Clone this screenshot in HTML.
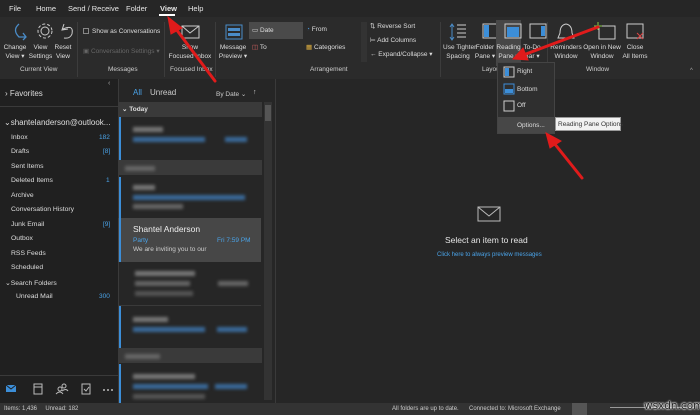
<!DOCTYPE html>
<html><head><meta charset="utf-8"><style>
*{margin:0;padding:0;box-sizing:border-box}
body{width:700px;height:415px;overflow:hidden;background:#262626;font-family:"Liberation Sans",sans-serif;color:#ddd;position:relative;font-size:7px}
.a{position:absolute;white-space:nowrap}
.tab{top:4px;font-size:7.5px;color:#e6e6e6}
.lbl{font-size:6.5px;color:#ddd;text-align:center;line-height:9px}
.glbl{top:66px;font-size:6.5px;color:#ccc}
.sep{position:absolute;top:22px;width:1px;height:55px;background:#3c3c3c}
.fold{left:11px;font-size:6.8px;color:#ddd}
.cnt{font-size:6.5px;color:#4aa3e8}
.blur{position:absolute;background:#5a6a7a;filter:blur(1.5px);height:5px}
.bar{position:absolute;left:119px;width:2px;background:#3c8ed8}
.hdr{position:absolute;left:118px;width:144px;height:15px;background:#3a3a3a}
</style></head><body>
<div class="a" style="left:0;top:0;width:700px;height:17px;background:#262626"></div>
<div class="a tab" style="left:9px">File</div>
<div class="a tab" style="left:36px">Home</div>
<div class="a tab" style="left:68px">Send / Receive</div>
<div class="a tab" style="left:126px">Folder</div>
<div class="a tab" style="left:160px;font-weight:bold">View</div>
<div class="a" style="left:159px;top:14px;width:16px;height:2px;background:#fff"></div>
<div class="a tab" style="left:188px">Help</div>
<div class="a" style="left:0;top:17px;width:700px;height:62px;background:#2b2b2b"></div>
<svg class="a" style="left:6px;top:20px" width="100" height="22"><path d="M13 4 Q6 10 13 17 L20 17 M17 13 L20 17 L17 20" stroke="#4a8cc8" fill="none" stroke-width="1.3"/><circle cx="39" cy="11" r="4" stroke="#ccc" fill="none"/><circle cx="39" cy="11" r="7" stroke="#ccc" fill="none" stroke-dasharray="3 2"/><path d="M58 4 L56 10 L62 9 M57 9 Q68 4 66 14 Q64 19 58 18" stroke="#ccc" fill="none"/></svg>
<div class="a lbl" style="left:3px;top:43px;width:24px">Change<br>View ▾</div>
<div class="a lbl" style="left:28px;top:43px;width:25px">View<br>Settings</div>
<div class="a lbl" style="left:53px;top:43px;width:20px">Reset<br>View</div>
<div class="a glbl" style="left:20px">Current View</div>
<div class="sep" style="left:77px"></div>
<div class="a" style="left:83px;top:28px;width:6px;height:6px;border:1px solid #888"></div>
<div class="a" style="left:92px;top:28px;font-size:6.5px;color:#ddd">Show as Conversations</div>
<div class="a" style="left:83px;top:47px;font-size:6.5px;color:#666">▣ Conversation Settings ▾</div>
<div class="a glbl" style="left:108px">Messages</div>
<div class="sep" style="left:164px"></div>
<svg class="a" style="left:180px;top:22px" width="22" height="18"><rect x="2" y="4" width="17" height="12" stroke="#ccc" fill="none"/><path d="M2 4 L10 11 L19 4" stroke="#ccc" fill="none"/></svg>
<div class="a lbl" style="left:168px;top:43px;width:44px">Show<br>Focused Inbox</div>
<div class="a glbl" style="left:170px">Focused Inbox</div>
<div class="sep" style="left:215px"></div>
<svg class="a" style="left:224px;top:22px" width="20" height="20"><rect x="2" y="3" width="16" height="14" stroke="#4a8cc8" fill="none"/><rect x="4" y="6" width="12" height="3" fill="#4a8cc8"/><rect x="4" y="11" width="12" height="3" fill="#4a8cc8"/></svg>
<div class="a lbl" style="left:218px;top:43px;width:30px">Message<br>Preview ▾</div>
<div class="a" style="left:249px;top:22px;width:54px;height:17px;background:#4a4a4a"></div>
<div class="a" style="left:252px;top:26px;font-size:6.5px">▭ Date</div>
<div class="a" style="left:252px;top:43px;font-size:6.5px;color:#ddd"><span style="color:#d66">◫</span> To</div>
<div class="a" style="left:306px;top:26px;font-size:6.5px"><span style="color:#4a8cc8">◔</span> From</div>
<div class="a" style="left:306px;top:43px;font-size:6.5px"><span style="color:#e0b040">▦</span> Categories</div>
<div class="a" style="left:361px;top:22px;width:6px;height:40px;background:#333"></div>
<div class="a" style="left:370px;top:22px;font-size:6.5px">⇅ Reverse Sort</div>
<div class="a" style="left:370px;top:36px;font-size:6.5px">⊨ Add Columns</div>
<div class="a" style="left:370px;top:50px;font-size:6.5px">← Expand/Collapse ▾</div>
<div class="a glbl" style="left:310px">Arrangement</div>
<div class="sep" style="left:440px"></div>
<svg class="a" style="left:448px;top:21px" width="125" height="22"><path d="M4 3 V19 M2 6 L4 3 L6 6 M2 16 L4 19 L6 16" stroke="#4a8cc8" fill="none"/><path d="M9 4 H18 M9 8 H18 M9 12 H18 M9 16 H18" stroke="#ccc"/><rect x="35" y="3" width="16" height="14" stroke="#ccc" fill="none"/><rect x="36" y="4" width="5" height="12" fill="#3c8ed8"/><rect x="82" y="3" width="16" height="14" stroke="#ccc" fill="none"/><rect x="93" y="5" width="4" height="10" fill="#3c8ed8"/></svg>
<div class="a" style="left:496px;top:20px;width:25px;height:46px;background:#474747"></div>
<svg class="a" style="left:503px;top:21px" width="20" height="20"><rect x="2" y="3" width="16" height="14" stroke="#ccc" fill="none"/><rect x="4" y="6" width="12" height="10" fill="#3c8ed8"/></svg>
<div class="a lbl" style="left:443px;top:43px;width:30px">Use Tighter<br>Spacing</div>
<div class="a lbl" style="left:474px;top:43px;width:22px">Folder<br>Pane ▾</div>
<div class="a lbl" style="left:496px;top:43px;width:25px">Reading<br>Pane ▾</div>
<div class="a lbl" style="left:521px;top:43px;width:22px">To-Do<br>Bar ▾</div>
<div class="a glbl" style="left:482px">Layout</div>
<div class="sep" style="left:547px"></div>
<svg class="a" style="left:555px;top:21px" width="120" height="22"><path d="M11 3 Q5 4 5 12 L3 17 H19 L17 12 Q17 4 11 3" stroke="#ccc" fill="none"/><rect x="44" y="5" width="16" height="13" stroke="#ccc" fill="none"/><path d="M43 1 V9 M39 5 H47" stroke="#8c4"/><rect x="72" y="3" width="16" height="14" stroke="#ccc" fill="none"/><path d="M82 12 L88 18 M88 12 L82 18" stroke="#d44"/></svg>
<div class="a lbl" style="left:550px;top:43px;width:32px">Reminders<br>Window</div>
<div class="a lbl" style="left:583px;top:43px;width:38px">Open in New<br>Window</div>
<div class="a lbl" style="left:620px;top:43px;width:30px">Close<br>All Items</div>
<div class="a glbl" style="left:586px">Window</div>
<div class="a" style="left:690px;top:68px;font-size:6px;color:#aaa">^</div>
<div class="a" style="left:0;top:79px;width:118px;height:324px;background:#202020"></div>
<div class="a" style="left:108px;top:80px;font-size:7px;color:#aaa">‹</div>
<div class="a" style="left:5px;top:89px;font-size:8px">› Favorites</div>
<div class="a" style="left:0;top:106px;width:118px;height:1px;background:#3a3a3a"></div>
<div class="a" style="left:4px;top:118px;font-size:8px">⌄shantelanderson@outlook...</div>
<div class="a fold" style="top:134px">Inbox</div><div class="a cnt" style="left:99px;top:134px">182</div>
<div class="a fold" style="top:148px">Drafts</div><div class="a cnt" style="left:103px;top:148px">[8]</div>
<div class="a fold" style="top:163px">Sent Items</div>
<div class="a fold" style="top:177px">Deleted Items</div><div class="a cnt" style="left:106px;top:177px">1</div>
<div class="a fold" style="top:192px">Archive</div>
<div class="a fold" style="top:206px">Conversation History</div>
<div class="a fold" style="top:221px">Junk Email</div><div class="a cnt" style="left:103px;top:221px">[9]</div>
<div class="a fold" style="top:235px">Outbox</div>
<div class="a fold" style="top:250px">RSS Feeds</div>
<div class="a fold" style="top:264px">Scheduled</div>
<div class="a fold" style="top:279px;left:5px">⌄Search Folders</div>
<div class="a fold" style="top:293px;left:16px">Unread Mail</div><div class="a cnt" style="left:99px;top:293px">300</div>
<div class="a" style="left:0;top:375px;width:118px;height:1px;background:#3a3a3a"></div>
<svg class="a" style="left:4px;top:382px" width="112" height="14"><rect x="2" y="3" width="10" height="7" fill="#3c8ed8"/><path d="M2 3 L7 7 L12 3" stroke="#202020" fill="none"/><rect x="30" y="2" width="8" height="10" stroke="#bbb" fill="none"/><path d="M30 5 H38" stroke="#bbb"/><circle cx="56" cy="7" r="2" stroke="#bbb" fill="none"/><circle cx="60" cy="4" r="2" stroke="#bbb" fill="none"/><path d="M52 12 Q56 8 59 12 M58 9 Q62 6 64 9" stroke="#bbb" fill="none"/><rect x="78" y="2" width="8" height="10" stroke="#bbb" fill="none"/><path d="M80 7 L82 9 L85 5" stroke="#bbb" fill="none"/><circle cx="100" cy="8" r="1" fill="#bbb"/><circle cx="104" cy="8" r="1" fill="#bbb"/><circle cx="108" cy="8" r="1" fill="#bbb"/></svg>
<div class="a" style="left:118px;top:79px;width:157px;height:324px;background:#262626"></div>
<div class="a" style="left:118px;top:79px;width:1px;height:324px;background:#3a3a3a"></div>
<div class="a" style="left:133px;top:88px;font-size:8px;color:#4aa3e8">All</div>
<div class="a" style="left:150px;top:88px;font-size:8px;color:#ccc">Unread</div>
<div class="a" style="left:216px;top:90px;font-size:6.5px;color:#ccc">By Date ⌄</div>
<div class="a" style="left:253px;top:89px;font-size:7px;color:#ccc">↑</div>
<div class="a" style="left:264px;top:102px;width:8px;height:298px;background:#333"></div>
<div class="a" style="left:265px;top:105px;width:6px;height:16px;background:#555"></div>
<div class="hdr" style="top:102px"></div><div class="a" style="left:122px;top:105px;font-size:6.5px;color:#ddd;font-weight:bold">⌄ Today</div>
<div class="bar" style="top:117px;height:43px"></div>
<div class="blur" style="left:133px;top:127px;width:30px;background:#777"></div>
<div class="blur" style="left:133px;top:137px;width:72px;background:#3a6a9a"></div><div class="blur" style="left:225px;top:137px;width:22px;background:#3a6a9a"></div>
<div class="hdr" style="top:160px"></div><div class="blur" style="left:125px;top:166px;width:30px;background:#666"></div>
<div class="bar" style="top:177px;height:41px"></div>
<div class="blur" style="left:133px;top:185px;width:22px;background:#777"></div>
<div class="blur" style="left:133px;top:195px;width:112px;background:#3a6a9a"></div>
<div class="blur" style="left:133px;top:204px;width:50px;background:#666"></div>
<div class="a" style="left:118px;top:218px;width:143px;height:44px;background:#474747"></div>
<div class="bar" style="top:218px;height:44px"></div>
<div class="a" style="left:133px;top:224px;font-size:8.5px;color:#eee">Shantel Anderson</div>
<div class="a" style="left:133px;top:237px;font-size:6.5px;color:#4aa3e8">Party</div>
<div class="a" style="left:217px;top:237px;font-size:6.5px;color:#4aa3e8">Fri 7:59 PM</div>
<div class="a" style="left:133px;top:246px;font-size:6.5px;color:#ccc">We are inviting you to our</div>
<div class="blur" style="left:135px;top:271px;width:60px;background:#777"></div>
<div class="blur" style="left:135px;top:281px;width:55px;background:#666"></div><div class="blur" style="left:218px;top:281px;width:30px;background:#666"></div>
<div class="blur" style="left:135px;top:291px;width:58px;background:#555"></div>
<div class="a" style="left:118px;top:305px;width:143px;height:1px;background:#3a3a3a"></div>
<div class="bar" style="top:306px;height:43px"></div>
<div class="blur" style="left:133px;top:317px;width:35px;background:#777"></div>
<div class="blur" style="left:133px;top:327px;width:72px;background:#3a6a9a"></div><div class="blur" style="left:217px;top:327px;width:30px;background:#3a6a9a"></div>
<div class="hdr" style="top:348px"></div><div class="blur" style="left:125px;top:354px;width:35px;background:#666"></div>
<div class="bar" style="top:364px;height:39px"></div>
<div class="blur" style="left:133px;top:374px;width:62px;background:#777"></div>
<div class="blur" style="left:133px;top:384px;width:75px;background:#3a6a9a"></div><div class="blur" style="left:215px;top:384px;width:32px;background:#3a6a9a"></div>
<div class="blur" style="left:133px;top:394px;width:72px;background:#555"></div>
<div class="a" style="left:275px;top:79px;width:1px;height:324px;background:#3a3a3a"></div>
<svg class="a" style="left:477px;top:206px" width="24" height="16"><rect x="1" y="1" width="22" height="14" stroke="#bbb" fill="none"/><path d="M1 1 L12 10 L23 1" stroke="#bbb" fill="none"/></svg>
<div class="a" style="left:445px;top:235px;font-size:8.5px;color:#e6e6e6">Select an item to read</div>
<div class="a" style="left:437px;top:252px;font-size:6px;color:#4aa3e8">Click here to always preview messages</div>
<div class="a" style="left:497px;top:62px;width:58px;height:72px;background:#2f2f2f;border:1px solid #444"></div>
<svg class="a" style="left:503px;top:66px" width="12" height="48"><rect x="1" y="1" width="10" height="10" stroke="#ccc" fill="none"/><rect x="2" y="2" width="4" height="8" fill="#3c8ed8"/><rect x="1" y="18" width="10" height="10" stroke="#3c8ed8" fill="none"/><rect x="2" y="23" width="8" height="4" fill="#3c8ed8"/><rect x="1" y="35" width="10" height="10" stroke="#ccc" fill="none"/></svg>
<div class="a" style="left:517px;top:68px;font-size:6.5px">Right</div>
<div class="a" style="left:517px;top:86px;font-size:6.5px">Bottom</div>
<div class="a" style="left:517px;top:102px;font-size:6.5px">Off</div>
<div class="a" style="left:498px;top:117px;width:56px;height:16px;background:#474747"></div>
<div class="a" style="left:517px;top:122px;font-size:6.5px">Options...</div>
<div class="a" style="left:555px;top:117px;width:66px;height:14px;background:#f2f2f2;border:1px solid #999;color:#333;font-size:6.5px;padding:3px 2px">Reading Pane Options</div>
<div class="a" style="left:0;top:403px;width:700px;height:12px;background:#333"></div>
<div class="a" style="left:4px;top:406px;font-size:6px;color:#ccc">Items: 1,436 &nbsp;&nbsp;&nbsp; Unread: 182</div>
<div class="a" style="left:392px;top:406px;font-size:6px;color:#ccc">All folders are up to date.</div>
<div class="a" style="left:469px;top:406px;font-size:6px;color:#ccc">Connected to: Microsoft Exchange</div>
<div class="a" style="left:572px;top:403px;width:15px;height:12px;background:#555"></div>
<div class="a" style="left:610px;top:407px;width:85px;height:1px;background:#999"></div>
<div class="a" style="left:644px;top:400px;font-size:10.5px;color:#222;text-shadow:0 0 2px #fff,0 0 2px #fff,0 0 1px #fff;font-family:'DejaVu Sans',sans-serif">wsxdn.com</div>
<svg class="a" style="left:0;top:0" width="700" height="415">
<g stroke="#e01b1b" stroke-width="3" fill="#e01b1b" stroke-linecap="round">
<line x1="215" y1="81" x2="176" y2="29"/><polygon points="168,17 182,28 171,34" stroke-width="1"/>
<line x1="598" y1="27" x2="526" y2="54"/><polygon points="513,59 523,48 528,60" stroke-width="1"/>
<line x1="582" y1="178" x2="554" y2="143"/><polygon points="546,133 561,141 550,148" stroke-width="1"/>
</g></svg>
</body></html>
